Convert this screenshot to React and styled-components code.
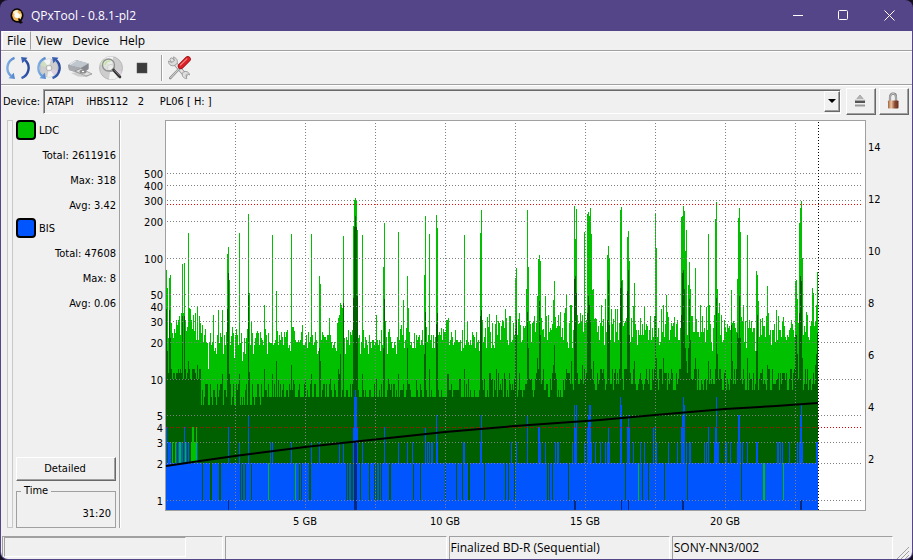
import { useId } from 'react';
import styled, { createGlobalStyle } from 'styled-components';

const GlobalStyle = createGlobalStyle`
  * {
    box-sizing: border-box;
  }
  body {
    margin: 0;
    background: #14101f;
    color: #000;
    font: 11px/14px 'DejaVu Sans Condensed', 'DejaVu Sans', Tahoma, sans-serif;
  }
  button,
  select {
    font: inherit;
    color: inherit;
  }
`;

const Window = styled.div`
  display: flex;
  flex-direction: column;
  min-height: 100vh;
  padding: 0 1px 1px;
  border-radius: 8px;
  background: #544488;
  overflow: hidden;
`;

const TitleBar = styled.header`
  display: flex;
  align-items: center;
  height: 31px;
  padding-left: 8px;
  gap: 6px;
  color: #fff;
  font: 12px/16px 'Open Sans', 'Noto Sans', sans-serif;

  h1 {
    flex: 1;
    margin: 0;
    font: inherit;
  }
`;

const CaptionButtons = styled.div`
  display: flex;
`;

const CaptionButton = styled.button`
  display: flex;
  align-items: center;
  justify-content: center;
  width: 46px;
  height: 31px;
  padding: 0;
  border: 0;
  background: none;
  color: #fff;
`;

const Client = styled.div`
  flex: 1;
  display: flex;
  flex-direction: column;
  border-radius: 0 0 7px 7px;
  background: #f0f0f0;
  overflow: hidden;
`;

const MenuBar = styled.nav`
  display: flex;
  height: 21px;
  padding-left: 1px;
  border-bottom: 1px solid #fff;
  box-shadow: inset 0 -1px #a0a0a0;
`;

const MenuItem = styled.button`
  height: 19px;
  padding: 0 4px;
  border: 1px solid;
  border-color: ${props => (props.$raised ? '#fff #a0a0a0 #f0f0f0 #fff' : 'transparent')};
  background: none;
  font: 12px/16px 'Open Sans', 'Noto Sans', sans-serif;
`;

const ToolBar = styled.div`
  display: flex;
  align-items: center;
  gap: 7px;
  height: 34px;
  padding: 0 5px 2px;
  border-bottom: 1px solid #fff;
  box-shadow: inset 0 -1px #a0a0a0;
`;

const ToolButton = styled.button`
  display: flex;
  width: 24px;
  height: 24px;
  padding: 0;
  border: 0;
  background: none;
`;

const Separator = styled.span`
  width: 2px;
  height: 26px;
  margin-right: -3px;
  border-left: 1px solid #a0a0a0;
  border-right: 1px solid #fff;
`;

const DeviceRow = styled.div`
  display: flex;
  align-items: center;
  gap: 3px;
  height: 30px;
  padding: 1px 3px 1px 2px;
`;

const DeviceLabel = styled.label`
  width: 37px;
  padding-top: 2px;
  white-space: nowrap;
`;

const SelectBox = styled.div`
  position: relative;
  flex: 1;
  margin-right: 2px;
`;

const Select = styled.select`
  display: block;
  width: 100%;
  height: 25px;
  padding: 2px 20px 0 3px;
  appearance: none;
  border: 1px solid;
  border-color: #a0a0a0 #fff #fff #a0a0a0;
  border-radius: 0;
  box-shadow: inset 1px 1px #696969;
  background: #f0f0f0;
`;

const SelectArrow = styled.span`
  position: absolute;
  top: 2px;
  right: 1px;
  bottom: 2px;
  width: 16px;
  display: flex;
  align-items: center;
  justify-content: center;
  border: 1px solid;
  border-color: #fff #696969 #696969 #fff;
  box-shadow: inset -1px -1px #a0a0a0;
  background: #f0f0f0;
  pointer-events: none;
`;

const PushButton = styled.button`
  display: flex;
  align-items: center;
  justify-content: center;
  width: ${props => props.$width || '100%'};
  height: ${props => props.$height};
  padding: 0 2px 0 0;
  border: 1px solid;
  border-color: #fff #696969 #696969 #fff;
  box-shadow: inset -1px -1px #a0a0a0;
  background: #f0f0f0;
`;

const Body = styled.main`
  flex: 1;
  display: flex;
`;

const SidePanel = styled.aside`
  display: flex;
  flex: none;
  width: 120px;
  padding: 4px 1px 6px 6px;
`;

const Splitter = styled.div`
  width: 6px;
  border: 1px solid #c8c8c8;
  background: #f3f3f3;
`;

const Stats = styled.div`
  flex: 1;
  display: flex;
  flex-direction: column;
  padding: 0 3px;
  border-right: 1px solid #a0a0a0;
  box-shadow: 1px 0 #fff;
`;

const SeriesHeader = styled.h2`
  display: flex;
  gap: 3px;
  height: 23px;
  margin: 0;
  font: inherit;
  line-height: 22px;
`;

const Swatch = styled.span`
  width: 20px;
  height: 20px;
  border: 2px solid #000;
  border-radius: 4px;
  background: ${props => props.$color};
`;

const StatLine = styled.p`
  margin: 0;
  height: 25px;
  line-height: 25px;
  text-align: right;
  white-space: nowrap;
`;

const Bottom = styled.div`
  margin-top: auto;
`;

const TimeBox = styled.fieldset`
  height: 43px;
  min-width: 0;
  margin: 4px 0 0;
  padding: 10px 4px 0;
  border: 1px solid #a0a0a0;
  text-align: right;

  legend {
    margin: 0 auto 0 0;
    padding: 0 3px;
    line-height: 12px;
  }
`;

const ChartArea = styled.section`
  flex: 1;
  min-width: 0;

  svg {
    display: block;
    width: 100%;
  }
  text {
    font-size: 11px;
  }
`;

const StatusBar = styled.footer`
  display: grid;
  grid-template-columns: repeat(4, 1fr) 16px;
  gap: 2px;
  height: 25px;
  padding: 2px 1px 1px;
`;

const StatusCell = styled.div`
  border: 1px solid;
  border-color: #a0a0a0 #fff #fff #a0a0a0;
  padding: 0 1px;
  font: 12px/22px 'Open Sans', 'Noto Sans', sans-serif;
  white-space: nowrap;
`;

const Progress = styled.div`
  width: 84%;
  height: 20px;
  border: 1px solid;
  border-color: #a0a0a0 #fff #fff #a0a0a0;
`;

const Grip = styled.svg`
  align-self: end;
`;

const PLOT_WIDTH = 700;
const PLOT_BOTTOM = 388;
const COLUMNS = 652;

const logY = value => Math.floor(378 - 121 * Math.log10(value));

// [column, top of the peak, top of the average]
const LDC_PEAKS = [
  [0, 148, 187], [1, 166, 229], [2, 216], [3, 156, 188], [4, 153, 216], [5, 201], [6, 211], [7, 216],
  [8, 207], [9, 211], [10, 198], [11, 203], [12, 198], [13, 194], [14, 213], [15, 191], [16, 142, 194],
  [17, 191], [18, 141, 194], [19, 198], [20, 209], [21, 205], [22, 111, 239], [23, 186], [24, 187],
  [25, 198], [26, 207], [27, 193], [28, 209], [29, 191], [30, 218], [31, 184, 243], [32, 218], [33, 194],
  [34, 201, 247], [35, 211], [36, 203], [37, 221], [38, 213], [39, 207], [40, 221], [41, 221], [42, 247],
  [43, 221], [44, 211], [45, 223], [46, 221], [47, 193], [48, 229], [49, 226], [50, 232], [51, 213],
  [52, 188], [53, 221], [54, 211], [55, 215], [56, 188, 252], [57, 232], [58, 213], [59, 223], [60, 210],
  [61, 132, 187], [62, 125, 151], [63, 158, 252], [64, 223], [65, 214], [66, 205], [67, 211], [68, 236],
  [69, 213], [70, 207], [71, 213], [72, 223], [73, 111, 252], [74, 221], [75, 211], [76, 239], [77, 230],
  [78, 216], [79, 232], [80, 216], [81, 207], [82, 92, 171], [83, 171, 250], [84, 223], [85, 199],
  [86, 211], [87, 232], [88, 223], [89, 216], [90, 211], [91, 209], [92, 211], [93, 223], [94, 210],
  [95, 216], [96, 218], [97, 223], [98, 183, 247], [99, 207], [100, 213], [101, 232], [102, 211],
  [103, 221], [104, 221], [105, 221], [106, 113, 252], [107, 223], [108, 221], [109, 218], [110, 169, 239],
  [111, 209], [112, 223], [125, 112, 243], [126, 205], [127, 205], [128, 209], [136, 203],
  [145, 112, 252], [153, 154, 226], [154, 162, 239], [163, 196], [171, 201], [172, 196, 247], [173, 193, 252],
  [174, 181, 232], [175, 183], [176, 186], [177, 114, 181], [178, 216], [187, 104, 176], [188, 78, 105],
  [189, 76, 94], [190, 78, 105], [191, 108, 174], [192, 216], [196, 113, 252], [210, 193],
  [217, 145, 226], [218, 101, 177], [219, 199], [223, 207], [232, 110, 252], [234, 207], [235, 203],
  [237, 178], [241, 154, 226], [242, 186], [248, 211], [258, 153, 232], [259, 94, 190], [260, 205],
  [263, 112, 247], [270, 93, 202], [271, 106, 191], [277, 207], [280, 198], [281, 198, 252], [282, 196, 252],
  [298, 113, 247], [301, 199], [314, 111, 194], [315, 88, 188], [316, 198], [322, 205], [326, 201],
  [330, 193, 247], [332, 199], [336, 198], [339, 187], [340, 196], [343, 194], [347, 201],
  [349, 156, 207], [350, 146, 198], [353, 191], [354, 203], [360, 167], [361, 88, 190], [362, 145, 226],
  [363, 199], [367, 199], [368, 194], [371, 174, 236], [372, 137, 247], [373, 133, 179], [374, 139, 213],
  [375, 196], [377, 207, 247], [379, 174], [380, 194], [382, 193], [387, 178, 243], [388, 159, 223],
  [392, 193], [394, 190], [398, 191], [399, 186], [400, 172, 247], [404, 183], [405, 183, 239],
  [408, 84, 157], [409, 117, 154], [410, 87, 171], [411, 193], [414, 191], [416, 193, 243],
  [418, 110, 247], [420, 198], [421, 92, 191], [422, 90, 174], [423, 94, 183], [424, 86, 198],
  [425, 112, 247], [426, 168], [427, 167, 239], [429, 196], [435, 183], [439, 177], [441, 133, 198],
  [442, 124, 158], [443, 136, 203], [445, 187], [449, 187], [451, 187], [454, 88, 166], [455, 85, 159],
  [456, 158], [460, 196], [461, 115, 169], [462, 109, 148], [463, 139, 213], [465, 196],
  [467, 184, 247], [468, 161, 239], [474, 196], [478, 184], [484, 194], [489, 92, 194], [490, 126, 236],
  [495, 187, 247], [497, 183, 236], [500, 173], [501, 190], [511, 198], [515, 95, 193], [516, 94, 151],
  [517, 84, 148], [518, 89, 167], [519, 129, 226], [520, 108, 239], [522, 163, 226], [523, 140, 177],
  [524, 167, 218], [525, 194], [529, 146, 236], [534, 183], [536, 194], [540, 185], [542, 112, 239],
  [543, 183], [548, 193], [549, 97, 247], [550, 80, 176], [551, 167, 232], [552, 191], [553, 181],
  [555, 193], [558, 198], [565, 168, 203], [566, 201, 239], [571, 157, 211], [572, 96, 216],
  [573, 86, 174], [574, 110, 216], [577, 183], [579, 199], [581, 113, 236], [583, 198],
  [590, 149, 229], [591, 153, 193], [592, 179], [596, 196], [601, 164, 243], [602, 191], [610, 188],
  [612, 194], [616, 199], [625, 198], [629, 159, 213], [630, 158, 213], [631, 177, 232],
  [633, 101, 191], [634, 86, 154], [635, 79, 159], [636, 136, 236], [640, 190], [641, 193],
  [646, 166], [647, 171], [649, 199, 243], [650, 183, 232], [651, 150, 211],
];

// columns where BIS rises above its usual level of 2
const BIS_PEAKS = {
  3: [2, 3, 4, 10, 12, 15, 16, 20, 22, 31, 73, 104, 106, 125, 145, 153, 173, 177, 196, 232, 241, 246, 261, 263,
    265, 266, 271, 297, 298, 314, 345, 350, 374, 379, 389, 391, 392, 406, 418, 425, 429, 434, 439, 441, 443,
    467, 474, 478, 490, 502, 511, 520, 523, 524, 538, 540, 548, 551, 552, 559, 560, 564, 571, 574, 576, 581,
    590, 591, 611, 612, 614, 616, 623, 631, 633, 636, 650, 651],
  4: [0, 18, 62, 187, 191, 218, 259, 372, 373, 409, 421, 442, 461, 463, 487, 489, 515, 542, 549],
  5: [82, 270, 315, 361, 422, 462, 516, 572, 573, 634],
  6: [408, 410, 423, 424, 455, 518, 635],
  7: [188, 190, 454, 517, 550],
  8: [189],
};

const BIS_GAPS = [36, 44, 45, 53, 54, 74, 76, 79, 85, 133, 135, 143, 144, 180, 182, 185, 186, 194, 203, 208, 210,
  213, 215, 223, 224, 247, 254, 279, 290, 296, 302, 303, 318, 339, 342, 348, 381, 383, 386, 402, 459, 476, 482,
  498, 521, 575];
const BIS_CLEAR = [102, 129, 472, 597, 598, 617];
const LDC_OVER_BIS = [[6, 3], [9, 3], [13, 3], [14, 3], [19, 3], [25, 3], [26, 4], [27, 4], [28, 3], [29, 3], [30, 4]];
const BIS_AVERAGE = [[62, 1], [188, 3], [189, 3], [190, 3], [408, 1], [409, 1], [455, 1], [462, 1], [516, 1],
  [517, 1], [634, 1], [635, 1]];

const SPEED_CURVE = '0,344 34,339 69,334 139,325 204,318 279,310 349,304 434,298 489,293 559,287 610,284 652,281';

const bar = (column, top, bottom = PLOT_BOTTOM) => `M${column} ${top}h1V${bottom}h-1z`;

const buildBars = () => {
  const peaks = new Map(LDC_PEAKS.map(([column, ...tops]) => [column, tops]));
  const bis = new Map();
  Object.entries(BIS_PEAKS).forEach(([level, columns]) => columns.forEach(c => bis.set(c, Number(level))));
  [...BIS_GAPS, ...BIS_CLEAR].forEach(c => bis.set(c, 1));

  let seed = 7;
  const random = () => {
    seed = (seed * 16807) % 2147483647;
    return seed / 2147483647;
  };

  let max = '';
  let average = '';
  let errors = '';
  for (let c = 0; c < COLUMNS; c += 1) {
    const noise = random() + random();
    const level = Math.round(c > 320 ? 16 + noise * 9 : 15 + noise * 6);
    let low = 7 + Math.floor(random() * random() * 4);
    if (c < 35) low = 10 + Math.floor(random() * 3);
    else if (c < 100) low = 6 + Math.floor(random() * 4);
    else if (c > 424) low = 8 + Math.floor(random() * 5);
    else if (c > 320) low = 7 + Math.floor(random() * 5);
    const [top, averageTop] = peaks.get(c) || [];
    max += bar(c, top ?? logY(level));
    average += bar(c, averageTop ?? logY(low));
    errors += bar(c, logY(bis.get(c) || 2));
  }
  return { max, average, errors };
};

const BARS = buildBars();
const LEFT_TICKS = [1, 2, 3, 4, 5, 10, 20, 30, 40, 50, 100, 200, 300, 400, 500];
const RIGHT_TICKS = [2, 4, 6, 8, 10, 12, 14];

const QualityChart = () => (
  <ChartArea>
    <svg viewBox="-45 -6 791 418" role="img" aria-label="LDC and BIS errors by disc position">
      <g shapeRendering="crispEdges">
        <rect x="-1" y="-2" width={PLOT_WIDTH + 1} height={PLOT_BOTTOM + 3} fill="#a0a0a0" />
        <rect x="0" y="-1" width={PLOT_WIDTH - 1} height={PLOT_BOTTOM + 1} fill="#fff" />
        <path d={BARS.max} fill="#00c000" />
        <path d={BARS.average} fill="#006000" />
        <path d={BARS.errors} fill="#0055ff" />
        <path d={BIS_CLEAR.map(c => bar(c, logY(2), logY(1))).join('')} fill="#00c000" />
        <path d={LDC_OVER_BIS.map(([c, v]) => bar(c, logY(v), logY(2))).join('')} fill="#00c000" />
        <path d={BIS_AVERAGE.map(([c, v]) => bar(c, logY(v))).join('')} fill="#002b80" />
        <g strokeDasharray="1 2" stroke="#808080">
          {LEFT_TICKS.map(value => (
            <path key={value} d={`M1 ${logY(value) + 0.5}H697`} stroke={value === 4 ? '#e00000' : undefined} />
          ))}
          {[69, 139, 209, 279, 349, 419, 489, 559, 629].map(x => (
            <path key={x} d={`M${x + 0.5} 1V388`} />
          ))}
          <path d="M1 82.5H697" stroke="#ff0000" />
          <path d="M652.5 0V388" stroke="#000" />
        </g>
      </g>
      <polyline points={SPEED_CURVE} fill="none" stroke="#000" strokeWidth="2" />
      {LEFT_TICKS.map(value => (
        <text key={value} x="-3" y={logY(value) + 5} textAnchor="end">
          {value}
        </text>
      ))}
      {RIGHT_TICKS.map(value => (
        <text key={value} x="702" y={393 - value * 26}>
          {value}
        </text>
      ))}
      {[5, 10, 15, 20].map(value => (
        <text key={value} x={value * 28 - 1} y="403" textAnchor="middle">
          {value} GB
        </text>
      ))}
    </svg>
  </ChartArea>
);

const LogoIcon = () => (
  <svg width="16" height="16" viewBox="0 0 16 16">
    <ellipse cx="8" cy="7.5" rx="6.5" ry="7.2" fill="#0c0804" />
    <path d="M9 11l5 3.5-2.5 1.3L7 13z" fill="#0c0804" />
    <ellipse cx="8" cy="7.3" rx="4.8" ry="5.6" fill="#f6b657" />
    <path d="M4 5c1-2.500 3-3 5-2.600L8 7z" fill="#fff4d0" />
    <path d="M8 7l4.400-1.500c.500 3-.700 5.500-2.400 6.500z" fill="#ffe9a0" />
    <circle cx="8" cy="7.3" r="2.6" fill="#fff" />
    <path d="M9.500 10.500l2.500 3" stroke="#0c0804" strokeWidth="1.600" />
  </svg>
);

const Disc = ({ cx, cy, r }) => (
  <g transform={`translate(${cx} ${cy}) scale(${r / 10})`}>
    <circle r="10" fill="#cdcdcd" stroke="#ababab" strokeWidth=".6" />
    <path d="M0 0L-6-8A10 10 0 012-9.800z" fill="#f4f4f4" />
    <path d="M0 0L-9.500-3A10 10 0 01-6-8z" fill="#cfe0c0" />
    <path d="M0 0L6 8a10 10 0 01-8 1.800z" fill="#f1f1f1" />
    <path d="M0 0L9.500 3A10 10 0 016 8z" fill="#dccfdf" />
    <circle r="3.200" fill="#eee" stroke="#9a9a9a" strokeWidth=".8" />
    <circle r="1.200" fill="#fff" />
  </g>
);

const RefreshIcon = ({ disc }) => {
  const id = useId();
  return (
    <svg width="24" height="24" viewBox="0 0 24 24">
      <defs>
        <linearGradient id={id} gradientUnits="userSpaceOnUse" x1="0" y1="0" x2="24" y2="0">
          <stop offset="0" stopColor="#86b4e6" />
          <stop offset=".4" stopColor="#4a80cb" />
          <stop offset="1" stopColor="#27439a" />
        </linearGradient>
      </defs>
      {disc && <Disc cx={12} cy={12} r={9} />}
      <g stroke={`url(#${id})`} strokeWidth="2.4" fill="none">
        <path d="M8.500 1.800A10.800 10.800 0 005 20" />
        <path d="M15.500 22.200A10.800 10.800 0 0019 4" />
      </g>
      <g fill={`url(#${id})`}>
        <path d="M2.500 22.300l6.500.7-1.300-6.200z" />
        <path d="M21.500 1.700L15 1l1.300 6.200z" />
      </g>
    </svg>
  );
};

const DriveIcon = () => (
  <svg width="24" height="24" viewBox="0 0 24 24">
    <path d="M3 17l7 3.500 9 .5 5-3-7-3z" fill="#bdbdbd" opacity=".7" />
    <path d="M0 9l8-5 12.500 3.500V13L13 18 1 14z" fill="#9a9fa6" />
    <path d="M0 9l8-5 12.500 3.500L13 12z" fill="#c0c6ce" />
    <path d="M0 9l13 3v6L1 14z" fill="#a9abb0" />
    <path d="M13 12l7.500-4.500V13L13 18z" fill="#85888e" />
    <path d="M7 15l6-2.500L24 18l-6 2z" fill="#dedede" stroke="#808285" strokeWidth=".6" />
    <ellipse cx="15" cy="15.500" rx="3.500" ry="2" fill="#8b8b8b" />
    <ellipse cx="15" cy="15.500" rx="1.200" ry=".7" fill="#fff" />
    <path d="M2 8.500l6-3.700" stroke="#f5f5f5" strokeWidth=".8" />
  </svg>
);

const ScanIcon = () => (
  <svg width="24" height="24" viewBox="0 0 24 24">
    <Disc cx={12} cy={12} r={11.5} />
    <circle cx="9.500" cy="9" r="6" fill="#e6e8e4" fillOpacity=".7" stroke="#909090" strokeWidth="1.300" />
    <path d="M6 9c.5-3 3-4.500 5.500-4" stroke="#c5e2a4" strokeWidth="1.500" fill="none" />
    <path d="M14.500 14l6.500 7" stroke="#333" strokeWidth="2.600" strokeLinecap="round" />
    <path d="M15 13.700l5.500 6" stroke="#8b8b8b" strokeWidth=".8" />
  </svg>
);

const StopIcon = () => (
  <svg width="24" height="24" viewBox="0 0 24 24">
    <rect x="7" y="7" width="10" height="10" fill="#3c3c3c" stroke="#555" strokeWidth=".5" />
  </svg>
);

const ToolsIcon = () => (
  <svg width="24" height="24" viewBox="0 0 26 26">
    <path d="M5 4l15 17" stroke="#8f8f8f" strokeWidth="4.500" strokeLinecap="round" />
    <path d="M5 4l15 17" stroke="#e2e2e2" strokeWidth="3" strokeLinecap="round" />
    <path d="M1.500 5.500C1.500 10 6 12 9.500 9.500S11 2 7 1l1 4-3 2z" fill="#dcdcdc" stroke="#8b8b8b" strokeWidth=".8" />
    <path d="M17 18c-1.500 3 .5 6.500 4.500 6.500L20.500 21l2-1.500 2 1C24 17 20 15.500 17 18z" fill="#dedede" stroke="#8b8b8b" strokeWidth=".8" />
    <path d="M13.500 13.500L3.500 24" stroke="#858585" strokeWidth="2.600" strokeLinecap="round" />
    <path d="M13.500 13.500L3.500 24" stroke="#cfcfcf" strokeWidth="1.200" />
    <path d="M15 11L22.500 3.500" stroke="#970d12" strokeWidth="6.500" strokeLinecap="round" />
    <path d="M15 11L22.500 3.500" stroke="#dc2228" strokeWidth="5" strokeLinecap="round" />
    <path d="M14.500 10L21.500 3" stroke="#f58b85" strokeWidth="1.200" strokeLinecap="round" />
  </svg>
);

const EjectIcon = () => (
  <svg width="12" height="14" viewBox="0 0 12 14">
    <path d="M6 1l5 6H1z" fill="#b5b5b5" stroke="#8a8a8a" strokeWidth=".6" />
    <path d="M2 5.500h8" stroke="#ddd" />
    <rect x="1" y="7" width="10" height="2" fill="#555" />
    <rect x="1" y="10.500" width="10" height="2" fill="#9b9b9b" />
  </svg>
);

const LockIcon = () => {
  const id = useId();
  return (
    <svg width="12" height="18" viewBox="0 0 12 18">
      <defs>
        <linearGradient id={id}>
          <stop offset="0" stopColor="#a3623f" />
          <stop offset=".3" stopColor="#edc5a4" />
          <stop offset=".65" stopColor="#8c4a30" />
          <stop offset="1" stopColor="#67301d" />
        </linearGradient>
      </defs>
      <path d="M3 9V5c0-4.500 6-4.500 6 0v4" fill="none" stroke="#777" strokeWidth="2.200" />
      <path d="M3 9V5c0-4.500 6-4.500 6 0v4" fill="none" stroke="#d8d8d8" strokeWidth=".9" />
      <rect x="1" y="8.500" width="10.500" height="8" rx=".8" fill={`url(#${id})`} />
    </svg>
  );
};

const CAPTION_ICONS = {
  Minimize: 'M1 5.500h10',
  Maximize: 'M1.500.5h7a1 1 0 011 1v7a1 1 0 01-1 1h-7a1 1 0 01-1-1v-7a1 1 0 011-1z',
  Close: 'M.5.5l10 10M10.500.5l-10 10',
};

const TOOLS = [
  { name: 'Refresh', icon: <RefreshIcon /> },
  { name: 'Rescan media', icon: <RefreshIcon disc /> },
  { name: 'Drive info', icon: <DriveIcon /> },
  { name: 'Scan', icon: <ScanIcon /> },
  { name: 'Stop', icon: <StopIcon /> },
];

const SERIES = [
  { name: 'LDC', color: '#00c000', total: 2611916, max: 318, avg: '3.42' },
  { name: 'BIS', color: '#0055ff', total: 47608, max: 8, avg: '0.06' },
];

const App = () => (
  <Window>
    <GlobalStyle />
    <TitleBar>
      <LogoIcon />
      <h1>QPxTool - 0.8.1-pl2</h1>
      <CaptionButtons>
        {Object.entries(CAPTION_ICONS).map(([name, d]) => (
          <CaptionButton key={name} aria-label={name}>
            <svg width="11" height="11" fill="none" stroke="currentColor">
              <path d={d} />
            </svg>
          </CaptionButton>
        ))}
      </CaptionButtons>
    </TitleBar>
    <Client>
      <MenuBar>
        {['File', 'View', 'Device', 'Help'].map(name => (
          <MenuItem key={name} $raised={name === 'File'}>
            {name}
          </MenuItem>
        ))}
      </MenuBar>
      <ToolBar>
        {TOOLS.map(({ name, icon }) => (
          <ToolButton key={name} aria-label={name}>
            {icon}
          </ToolButton>
        ))}
        <Separator />
        <ToolButton aria-label="Preferences">
          <ToolsIcon />
        </ToolButton>
      </ToolBar>
      <DeviceRow>
        <DeviceLabel htmlFor="device">Device:</DeviceLabel>
        <SelectBox>
          <Select id="device">
            <option>{'ATAPI\u00a0\u00a0\u00a0 iHBS112\u00a0\u00a0 2\u00a0\u00a0\u00a0\u00a0 PL06 [ H: ]'}</option>
          </Select>
          <SelectArrow>
            <svg width="8" height="4">
              <path d="M0 0h8L4 4z" />
            </svg>
          </SelectArrow>
        </SelectBox>
        <PushButton $width="30px" $height="27px" aria-label="Eject">
          <EjectIcon />
        </PushButton>
        <PushButton $width="30px" $height="27px" aria-label="Lock">
          <LockIcon />
        </PushButton>
      </DeviceRow>
      <Body>
        <SidePanel>
          <Splitter />
          <Stats>
            {SERIES.map(({ name, color, total, max, avg }) => (
              <div key={name}>
                <SeriesHeader>
                  <Swatch $color={color} />
                  {name}
                </SeriesHeader>
                <StatLine>Total: {total}</StatLine>
                <StatLine>Max: {max}</StatLine>
                <StatLine>Avg: {avg}</StatLine>
              </div>
            ))}
            <Bottom>
              <PushButton $height="24px">Detailed</PushButton>
              <TimeBox>
                <legend>Time</legend>
                31:20
              </TimeBox>
            </Bottom>
          </Stats>
        </SidePanel>
        <QualityChart />
      </Body>
      <StatusBar>
        <StatusCell>
          <Progress />
        </StatusCell>
        <StatusCell />
        <StatusCell>Finalized BD-R (Sequential)</StatusCell>
        <StatusCell>SONY-NN3/002</StatusCell>
        <Grip width="14" height="14" stroke="#a0a0a0" fill="none">
          <path d="M1 14L14 1M5 14l9-9M9 14l5-5" />
        </Grip>
      </StatusBar>
    </Client>
  </Window>
);

export default App;
